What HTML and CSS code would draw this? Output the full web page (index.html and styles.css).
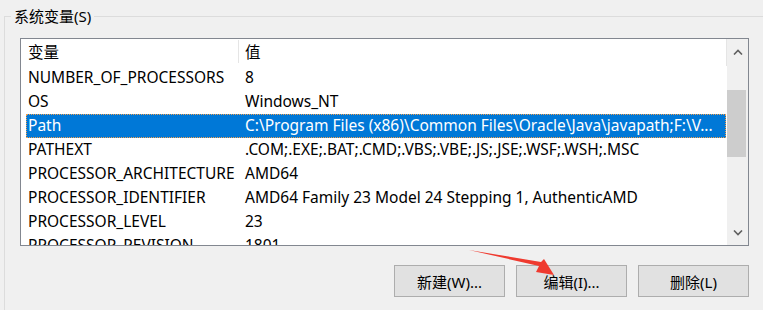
FILE: index.html
```html
<!DOCTYPE html>
<html>
<head>
	<meta charset="utf-8">
	<title>系统变量</title>
	<link rel="stylesheet" href="styles.css">
</head>
<body>

<div class="grupo">
  <span class="grupo-titulo">系统变量(S)</span>

  <div class="lista">
    <div class="filas">
      <div class="cabecera">
        <div class="celda">变量</div>
        <div class="celda">值</div>
      </div>
      <div class="fila"><div class="celda">NUMBER_OF_PROCESSORS</div><div class="celda">8</div></div>
      <div class="fila"><div class="celda">OS</div><div class="celda">Windows_NT</div></div>
      <div class="fila sel"><div class="celda">Path</div><div class="celda">C:\Program Files (x86)\Common Files\Oracle\Java\javapath;F:\V...</div></div>
      <div class="fila"><div class="celda">PATHEXT</div><div class="celda">.COM;.EXE;.BAT;.CMD;.VBS;.VBE;.JS;.JSE;.WSF;.WSH;.MSC</div></div>
      <div class="fila"><div class="celda">PROCESSOR_ARCHITECTURE</div><div class="celda">AMD64</div></div>
      <div class="fila"><div class="celda">PROCESSOR_IDENTIFIER</div><div class="celda">AMD64 Family 23 Model 24 Stepping 1, AuthenticAMD</div></div>
      <div class="fila"><div class="celda">PROCESSOR_LEVEL</div><div class="celda">23</div></div>
      <div class="fila"><div class="celda">PROCESSOR_REVISION</div><div class="celda">1801</div></div>
    </div>

    <div class="barra">
      <div class="flecha">
        <svg width="10" height="6" viewBox="0 0 10 6"><path d="M1 5.5 L5 1.5 L9 5.5" fill="none" stroke="#606060" stroke-width="1.6"/></svg>
      </div>
      <div class="pista">
        <div class="pulgar"></div>
      </div>
      <div class="flecha">
        <svg width="10" height="6" viewBox="0 0 10 6"><path d="M1 0.5 L5 4.5 L9 0.5" fill="none" stroke="#606060" stroke-width="1.6"/></svg>
      </div>
    </div>
  </div>

  <div class="botones">
    <button class="boton">新建(W)...</button>
    <button class="boton">编辑(I)...</button>
    <button class="boton">删除(L)</button>
  </div>
</div>

<!-- flecha roja de anotación -->
<svg class="anotacion" width="763" height="310" viewBox="0 0 763 310">
  <polygon points="469,250 541,262 544,259 554,275 536,272 539,266" fill="#ef3a2f"/>
</svg>

</body>
</html>
```

FILE: styles.css
```css
body {
    margin: 0;
    background: #f0f0f0;
    font-family: "Noto Sans", "Noto Sans CJK SC", sans-serif;
    font-size: 15px;
    color: #000;
    position: relative;
    height: 310px;
    overflow: hidden;
}

.grupo {
    position: relative;
    margin: 16px 0 0 4px;
    border-top: 1px solid #dcdcdc;
    border-left: 1px solid #dcdcdc;
    padding: 21px 0 0 15px;
    height: 294px;
    box-sizing: border-box;
}

.grupo-titulo {
    position: absolute;
    top: -10px;
    left: 6px;
    padding: 0 3px;
    background: #f0f0f0;
    line-height: 18px;
}

.lista {
    width: 727px;
    height: 206px;
    border: 1px solid #828790;
    background: #fff;
    display: flex;
    overflow: hidden;
    font-size: 15.5px;
}

.filas {
    flex: 1;
    padding: 0 1px 0 5px;
    overflow: hidden;
}

.cabecera,
.fila {
    display: grid;
    grid-template-columns: 217px 1fr;
    white-space: nowrap;
}

.cabecera {
    height: 27px;
    line-height: 26px;
    border-right: 1px solid #e5e5e5;
    margin-right: -1px;
}

.cabecera .celda:first-child {
    border-right: 1px solid #e5e5e5;
    margin: 1px 4px 3px 0;
    line-height: 24px;
}

.fila {
    height: 24px;
    line-height: 23px;
}

.celda {
    padding-left: 2px;
    overflow: hidden;
}

.fila.sel {
    background: #0078d7;
    color: #fff;
    outline: 1px dotted #f0a050;
    outline-offset: -1px;
}

.barra {
    width: 21px;
    background: #f0f0f0;
    display: flex;
    flex-direction: column;
}

.flecha {
    height: 25px;
    display: flex;
    align-items: center;
    justify-content: center;
}

.pista {
    flex: 1;
    padding-top: 26px;
}

.pulgar {
    width: 19px;
    height: 67px;
    background: #cdcdcd;
}

.botones {
    display: flex;
    justify-content: flex-end;
    gap: 11px;
    width: 729px;
    margin-top: 19px;
}

.boton {
    width: 111px;
    height: 32px;
    background: #e1e1e1;
    border: 1px solid #adadad;
    font-family: inherit;
    font-size: 15px;
    color: #000;
    padding: 0;
}

.anotacion {
    position: absolute;
    top: 0;
    left: 0;
    pointer-events: none;
}
```
